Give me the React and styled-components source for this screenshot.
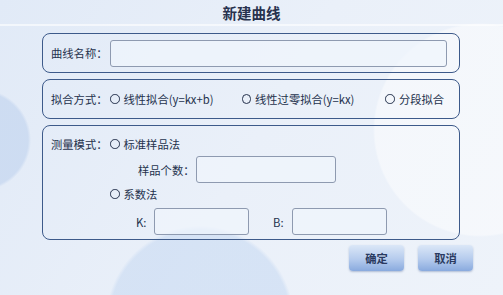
import React from "react";
import styled, { createGlobalStyle } from "styled-components";

const Global = createGlobalStyle`
  html, body {
    margin: 0;
    padding: 0;
    width: 503px;
    height: 295px;
    overflow: hidden;
  }
  body {
    font-family: "Noto Sans CJK SC", "Noto Sans", sans-serif;
    color: #25324d;
  }
`;

const Page = styled.div`
  width: 503px;
  height: 295px;
  box-sizing: border-box;
  background:
    radial-gradient(circle at 480px 130px, rgba(255,255,255,0.45) 0, rgba(255,255,255,0.45) 105px, rgba(255,255,255,0) 107px),
    radial-gradient(circle at 200px 320px, rgba(203,220,243,0.65) 0, rgba(203,220,243,0.65) 90px, rgba(203,220,243,0) 94px),
    radial-gradient(circle at -20px 140px, rgba(198,215,240,0.75) 0, rgba(198,215,240,0.75) 48px, rgba(198,215,240,0) 51px),
    linear-gradient(120deg, #e1eaf7 0%, #eaf0f9 50%, #eef3fa 100%);
  display: flex;
  flex-direction: column;
`;

const Header = styled.div`
  height: 26px;
  display: flex;
  align-items: center;
  justify-content: center;
  font-size: 14.5px;
  font-weight: 700;
  color: #28324e;
  border-bottom: 2px solid rgba(255, 255, 255, 0.6);
  box-sizing: border-box;
`;

const Body = styled.div`
  display: flex;
  flex-direction: column;
  gap: 6px;
  padding: 7px 0 0 42px;
  width: 418px;
`;

const Panel = styled.div`
  border: 1.5px solid #3d5a8a;
  border-radius: 8px;
  box-sizing: border-box;
  height: ${(p) => p.h}px;
  padding: ${(p) => p.pad || "0 12px 0 8px"};
  display: flex;
  flex-direction: ${(p) => (p.column ? "column" : "row")};
  align-items: ${(p) => (p.column ? "stretch" : "center")};
`;

const Label = styled.span`
  font-size: 11.3px;
  color: #25324d;
  white-space: nowrap;
  width: ${(p) => (p.w ? p.w + "px" : "auto")};
  margin-left: ${(p) => p.ml || 0}px;
  text-align: ${(p) => p.align || "left"};
  flex-shrink: 0;
`;

const Input = styled.div`
  box-sizing: border-box;
  height: 27px;
  width: ${(p) => (p.w ? p.w + "px" : "auto")};
  flex: ${(p) => (p.w ? "none" : "1")};
  margin-left: ${(p) => p.ml || 0}px;
  border: 1px solid #8e9ab0;
  border-radius: 3px;
  background: rgba(240, 245, 252, 0.7);
`;

const Radio = styled.label`
  display: flex;
  align-items: center;
  gap: 4px;
  font-size: 11.3px;
  color: #25324d;
  white-space: nowrap;
  margin-right: ${(p) => p.mr || 0}px;
`;

const Circle = styled.span`
  width: 7.5px;
  height: 7.5px;
  border: 1.5px solid #25324d;
  border-radius: 50%;
  flex-shrink: 0;
`;

const Row = styled.div`
  display: flex;
  align-items: center;
  height: ${(p) => p.h}px;
  padding-left: ${(p) => p.pl || 0}px;
`;

const Footer = styled.div`
  display: flex;
  justify-content: flex-end;
  gap: 14px;
  padding: 5px 30px 0 0;
`;

const Button = styled.button`
  width: 55px;
  height: 26px;
  border: none;
  border-radius: 4px;
  font-family: inherit;
  font-size: 11.3px;
  font-weight: 700;
  color: #2a3a60;
  background: linear-gradient(180deg, #dbe7f7 0%, #b5cbed 55%, #89aade 100%);
  box-shadow: 0 1px 2px rgba(60, 90, 140, 0.35);
  padding: 0;
`;

export default function App() {
  return (
    <Page>
      <Global />
      <Header>新建曲线</Header>
      <Body>
        <Panel h={40}>
          <Label w={59}>曲线名称：</Label>
          <Input />
        </Panel>
        <Panel h={40}>
          <Label w={59}>拟合方式：</Label>
          <Radio mr={28}>
            <Circle />
            线性拟合(y=kx+b)
          </Radio>
          <Radio mr={31}>
            <Circle />
            线性过零拟合(y=kx)
          </Radio>
          <Radio>
            <Circle />
            分段拟合
          </Radio>
        </Panel>
        <Panel h={115} column pad="6px 12px 0 8px">
          <Row h={24}>
            <Label w={59}>测量模式：</Label>
            <Radio>
              <Circle />
              标准样品法
            </Radio>
          </Row>
          <Row h={27} pl={87}>
            <Label w={58}>样品个数：</Label>
            <Input w={140} />
          </Row>
          <Row h={22} pl={59}>
            <Radio>
              <Circle />
              系数法
            </Radio>
          </Row>
          <Row h={33} pl={85}>
            <Label w={18}>K:</Label>
            <Input w={95} />
            <Label w={19} ml={24}>B:</Label>
            <Input w={95} />
          </Row>
        </Panel>
      </Body>
      <Footer>
        <Button>确定</Button>
        <Button>取消</Button>
      </Footer>
    </Page>
  );
}
